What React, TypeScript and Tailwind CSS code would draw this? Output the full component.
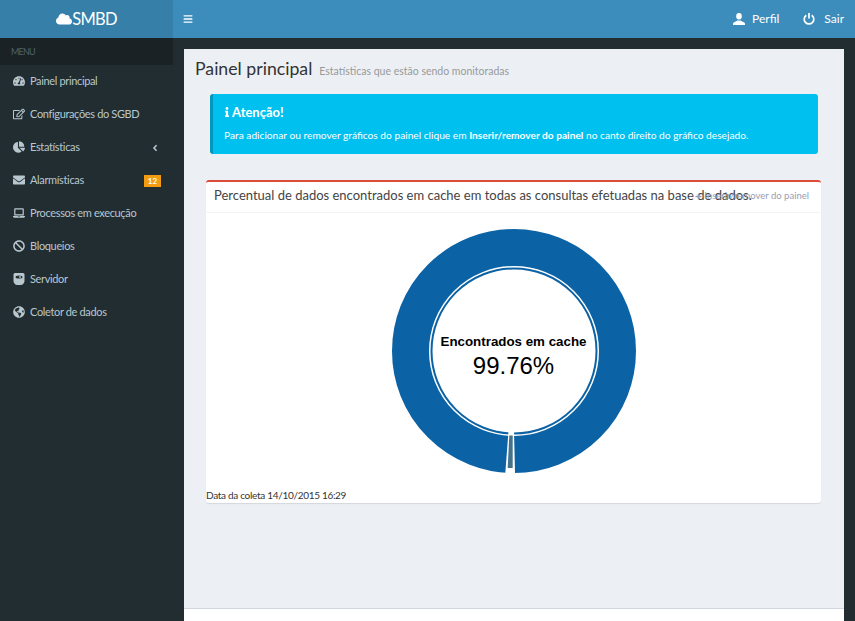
import { FaBan, FaChartPie, FaEnvelope, FaGlobeAmericas, FaInfo, FaLaptop, FaRegEdit, FaTachometerAlt, FaCloud, FaBars, FaAngleLeft, FaPlus } from "react-icons/fa";

function ServerIcon({ className }: { className?: string }) {
  return (
    <svg viewBox="0 0 12 12" className={className}>
      <path fill="currentColor" d="M2 0h8a1.5 1.5 0 0 1 1.5 1.5V8c0 2-2 4-3.5 4H4C2.500 12 .5 10 .5 8V1.500A1.500 1.500 0 0 1 2 0Z" />
      <ellipse cx="6" cy="4" rx="3.500" ry="1.600" fill="#222d32" />
      <circle cx="7" cy="4" r="0.900" fill="currentColor" />
    </svg>
  );
}

function UserIcon({ className }: { className?: string }) {
  return (
    <svg viewBox="0 0 12 12" className={className} fill="currentColor">
      <ellipse cx="6" cy="3.300" rx="2.800" ry="3.300" />
      <path d="M0 12v-1.500C0 9.300 3 8.800 4.400 7.500h3.200C9 8.800 12 9.300 12 10.500V12Z" />
    </svg>
  );
}

function PowerIcon({ className }: { className?: string }) {
  return (
    <svg viewBox="0 0 12 12" className={className} fill="none" stroke="currentColor" strokeWidth="1.700">
      <path d="M3.300 2.200a4.800 4.800 0 1 0 5.400 0" />
      <path d="M6 0v5.500" />
    </svg>
  );
}

const menu = [
  { label: "Painel principal", icon: FaTachometerAlt },
  { label: "Configurações do SGBD", icon: FaRegEdit },
  { label: "Estatísticas", icon: FaChartPie, arrow: true },
  { label: "Alarmísticas", icon: FaEnvelope, badge: "12" },
  { label: "Processos em execução", icon: FaLaptop },
  { label: "Bloqueios", icon: FaBan },
  { label: "Servidor", icon: ServerIcon },
  { label: "Coletor de dados", icon: FaGlobeAmericas },
];

function Donut() {
  return (
    <svg width="244" height="244" viewBox="0 0 244 244">
      <circle cx="122" cy="122" r="103.500" fill="none" stroke="#0b62a4" strokeWidth="37" />
      <circle cx="122" cy="122" r="82.500" fill="#fff" stroke="#0b62a4" strokeWidth="2" />
      {/* fatia de 0.24% */}
      <path d="M113.300 244L123 244L122 202L116.500 202Z" fill="#fff" />
      <path d="M115.700 239L120.700 239L120.700 206.500L117.300 206.500Z" fill="#44728a" />
    </svg>
  );
}

export default function App() {
  return (
    <div className="flex h-[621px] w-[855px] flex-col overflow-hidden bg-[#222d32] font-['Lato',sans-serif] text-[12px] text-[#333]">
      <header className="flex h-[38px] shrink-0 bg-[#3c8dbc] text-white">
        <div className="flex w-[173px] items-center justify-center bg-[#367fa9] text-[16.5px] tracking-[-0.7px]">
          <FaCloud className="h-[16px] w-[16px]" />
          <span>SMBD</span>
        </div>
        <div className="flex flex-1 items-center pl-[10px] pr-[11px]">
          <FaBars className="h-[10px] w-[10px]" />
          <div className="ml-auto flex items-center text-[12px]">
            <UserIcon className="h-[12px] w-[12px]" />
            <span className="ml-[7px]">Perfil</span>
            <PowerIcon className="ml-[24px] h-[12px] w-[12px]" />
            <span className="ml-[9px]">Sair</span>
          </div>
        </div>
      </header>
      <div className="flex min-h-0 flex-1">
        <aside className="w-[184px] shrink-0">
          <div className="flex h-[27px] w-[173px] items-center bg-[#1a2226] pl-[11px] text-[9px] tracking-[-0.8px] text-[#4b646f]">MENU</div>
          <nav className="w-[173px]">
            {menu.map((m) => (
              <div key={m.label} className="flex h-[33px] items-center pl-[13px] pr-[12px] text-[#b8c7ce]">
                <m.icon className="mb-[2px] h-[12px] w-[12px] shrink-0" />
                <span className="ml-[5px] text-[11px] tracking-[-0.35px]">{m.label}</span>
                {m.arrow && <FaAngleLeft className="ml-auto mr-[1px] h-[10px] w-[10px]" />}
                {m.badge && (
                  <span className="ml-auto flex h-[12px] w-[17px] items-center justify-center bg-[#f39c12] text-[8px] font-bold text-white">{m.badge}</span>
                )}
              </div>
            ))}
          </nav>
        </aside>
        <main className="mr-[11px] mt-[11px] flex min-w-0 flex-1 flex-col bg-[#ecf0f5]">
          <div className="flex-1 pt-[9px]">
            <div className="flex items-baseline pl-[11px]">
              <h1 className="text-[17.7px] leading-[22px]">Painel principal</h1>
              <small className="ml-[7px] text-[10.5px] text-[#999]">Estatísticas que estão sendo monitoradas</small>
            </div>
            <div className="ml-[26px] mt-[14px] h-[60px] w-[608px] rounded-[3px] border-l-[3px] border-[#0097bc] bg-[#00c0ef] pl-[11px] pt-[8px] text-white">
              <div className="flex items-center text-[13px] font-bold leading-[20px]">
                <FaInfo className="h-[10px] w-[6px]" />
                <span className="ml-[2px]">Atenção!</span>
              </div>
              <p className="mt-[6px] text-[10.2px] leading-[15px]">
                Para adicionar ou remover gráficos do painel clique em <b>Inserir/remover do painel</b> no canto direito do gráfico desejado.
              </p>
            </div>
            <section className="ml-[22px] mt-[26px] h-[323px] w-[615px] rounded-[3px] border-t-2 border-[#dd4b39] bg-white shadow-[0_1px_1px_rgba(0,0,0,0.1)]">
              <div className="relative flex h-[31px] items-center border-b border-[#f4f4f4] pb-[2px] pl-[8px]">
                <h3 className="whitespace-nowrap text-[13px] text-[#444]">Percentual de dados encontrados em cache em todas as consultas efetuadas na base de dados.</h3>
                <span className="absolute right-[12px] flex items-center whitespace-nowrap text-[9.5px] text-[#97a0b3]">
                  <FaPlus className="mr-[2px] h-[7px] w-[7px]" />
                  Inserir/remover do painel
                </span>
              </div>
              <div className="relative flex justify-center pt-[16px]">
                <Donut />
                <div className="absolute left-0 right-0 top-[120px] flex flex-col items-center font-['Liberation_Sans',sans-serif] text-black">
                  <span className="text-[13.33px] font-bold leading-[18px]">Encontrados em cache</span>
                  <span className="text-[24px] leading-[30px]">99.76%</span>
                </div>
              </div>
              <div className="mt-[15px] text-[10px] leading-[14px] tracking-[-0.3px]">Data da coleta 14/10/2015 16:29</div>
            </section>
          </div>
          <footer className="h-[13px] shrink-0 border-t border-[#d2d6de] bg-white" />
        </main>
      </div>
    </div>
  );
}
